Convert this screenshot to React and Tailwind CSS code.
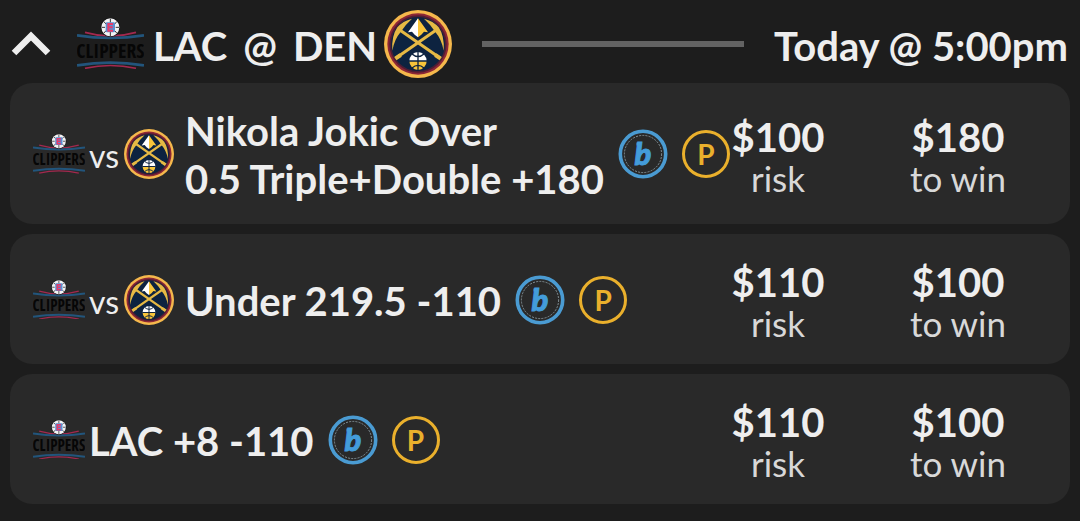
import React, { useState } from 'react';

const bets = [
  { teams: ['LAC', 'DEN'], lines: ['Nikola Jokic Over', '0.5 Triple+Double +180'], risk: '$100', win: '$180' },
  { teams: ['LAC', 'DEN'], lines: ['Under 219.5 -110'], risk: '$110', win: '$100' },
  { teams: ['LAC'], lines: ['LAC +8 -110'], risk: '$110', win: '$100' },
];

function ClippersLogo({ className }) {
  return (
    <svg viewBox="0 0 201 153" className={className} role="img" aria-label="Clippers">
      <g fill="none">
        <path d="M24 43Q100 65 177 43" stroke="#a3294f" strokeWidth="5" />
        <path d="M0 52Q100 68 201 52" stroke="#22557c" strokeWidth="8" />
        <path d="M0 142Q100 126 201 142" stroke="#22557c" strokeWidth="8" />
        <path d="M24 151Q100 134 177 151" stroke="#a3294f" strokeWidth="5" />
      </g>
      <text x="100" y="120" textAnchor="middle" fontSize="59" fontWeight="700" fill="#060606" fontFamily="'Noto Sans ExtraCondensed', 'Open Sans Condensed', 'Roboto Condensed', 'Liberation Sans Narrow', sans-serif">
        CLIPPERS
      </text>
      <circle cx="100" cy="28" r="29" fill="#111" />
      <circle cx="100" cy="28" r="27" fill="#f2f2f4" />
      <path d="M100 2V14M100 42V54M74 28H84M116 28H126M80 10L87 18M120 10L113 18M80 46L87 38M120 46L113 38" stroke="#333" strokeWidth="3" fill="none" />
      <rect x="86" y="13" width="28" height="30" rx="4" fill="#5a8ed0" />
      <path d="M108 18H94V38H108M94 28H107" stroke="#e83a68" strokeWidth="6" fill="none" />
    </svg>
  );
}

function NuggetsLogo({ className }) {
  return (
    <svg viewBox="0 0 204 204" className={className} role="img" aria-label="Nuggets">
      <circle cx="102" cy="102" r="102" fill="#f5b84c" />
      <circle cx="102" cy="102" r="92" fill="#8c2636" />
      <circle cx="102" cy="102" r="86" fill="#4f1d33" />
      <circle cx="102" cy="102" r="81" fill="#0d2340" />
      {/* pickaxes */}
      <g fill="#e6b944">
        <path d="M84 26Q56 33 40 52Q22 78 25 122Q31 88 50 66Q62 46 84 26Z" />
        <path d="M120 26Q148 33 164 52Q182 78 179 122Q173 88 154 66Q142 46 120 26Z" />
      </g>
      <path d="M42 56L168 144M162 56L36 144" stroke="#e6b944" strokeWidth="9" />
      <path d="M34 146L50 135M170 146L154 135" stroke="#e6b944" strokeWidth="12" />
      {/* mountain peak */}
      <path d="M102 25L72 67L84 65L92 74L102 82Z" fill="#fff" />
      <path d="M102 25L132 67L120 65L112 74L102 82Z" fill="#f8c53a" />
      {/* ball */}
      <path d="M76 153A26 27 0 0 1 128 153Z" fill="#fff" />
      <path d="M76 153A26 27 0 0 0 128 153Z" fill="#f8c53a" />
      <path d="M102 124V182M75 153H129M84 132Q102 148 120 132M84 174Q102 158 120 174" stroke="#0d2340" strokeWidth="4" fill="none" />
    </svg>
  );
}

function BookBadge() {
  return (
    <svg viewBox="0 0 50 50" className="size-[50px] shrink-0" role="img" aria-label="Book">
      <circle cx="25" cy="25" r="22.7" fill="none" stroke="#4a9bd2" strokeWidth="3.6" />
      <circle cx="25" cy="25" r="18.6" fill="none" stroke="#8a999f" strokeWidth="0.9" strokeDasharray="2 1.2" />
      <path d="M18.5 15H23" stroke="#439cda" strokeWidth="3" />
      <text x="25" y="36" textAnchor="middle" fontSize="31" fontWeight="900" fontStyle="italic" fill="#439cda" stroke="#439cda" strokeWidth="1" fontFamily="Lato, sans-serif">
        b
      </text>
    </svg>
  );
}

function PendingBadge() {
  return (
    <span className="flex size-12 shrink-0 items-center justify-center rounded-full border-3 border-[#eab02c] text-[28px] leading-none font-bold text-[#eab02c]">
      P
    </span>
  );
}

function Stat({ amount, label }) {
  return (
    <div className="w-24 shrink-0 pt-1 text-center whitespace-nowrap">
      <div className="text-[40px] leading-[44px] font-bold">{amount}</div>
      <div className="text-[35px] leading-[39px] text-[#d8d8d8]">{label}</div>
    </div>
  );
}

function BetCard({ bet }) {
  return (
    <li className="flex min-h-[130px] items-center rounded-[22px] bg-[#292929] pt-[22px] pr-16 pb-[21px] pl-[23px]">
      <div className="flex min-w-0 flex-1 items-center">
        <ClippersLogo className="w-[52px] shrink-0" />
        {bet.teams.length > 1 && (
          <>
            <span className="mr-[5px] ml-1 pt-1 text-[32px] leading-10">vs</span>
            <NuggetsLogo className="mr-[7px] size-[50px] shrink-0" />
          </>
        )}
        <div className="ml-1 pt-0.5 text-[40px] leading-12 font-bold whitespace-nowrap">
          {bet.lines.map((line) => (
            <div key={line}>{line}</div>
          ))}
        </div>
        <div className="ml-[14px] flex items-center gap-[14px]">
          <BookBadge />
          <PendingBadge />
        </div>
      </div>
      <div className="flex gap-[84px]">
        <Stat amount={bet.risk} label="risk" />
        <Stat amount={bet.win} label="to win" />
      </div>
    </li>
  );
}

export default function App() {
  const [open, setOpen] = useState(true);

  return (
    <div className="min-h-screen bg-[#1d1d1d] px-[10px] pb-4 font-['Lato',sans-serif] text-[#eeeeee]">
      <header className="flex h-[83px] items-center pt-1 text-[40px] leading-12 font-bold whitespace-nowrap">
        <button type="button" aria-label="Toggle game" aria-expanded={open} onClick={() => setOpen(!open)} className="mr-[25px] cursor-pointer">
          <svg viewBox="0 0 42 28" className={open ? 'w-[42px]' : 'w-[42px] rotate-180'}>
            <path d="M4 23L21 6L38 23" fill="none" stroke="#eeeeee" strokeWidth="6.5" />
          </svg>
        </button>
        <ClippersLogo className="w-[67px] shrink-0" />
        <h1 className="mr-[7px] ml-[9px] flex gap-4 pt-1">
          <span>LAC</span>
          <span>@</span>
          <span>DEN</span>
        </h1>
        <NuggetsLogo className="size-[68px] shrink-0" />
        <div className="mx-[30px] h-[6px] flex-1 bg-[#636363]"></div>
        <time className="mr-0.5 pt-1">Today @ 5:00pm</time>
      </header>

      {open && (
        <ul className="flex flex-col gap-[10px]">
          {bets.map((bet) => (
            <BetCard key={bet.lines[0]} bet={bet} />
          ))}
        </ul>
      )}
    </div>
  );
}
